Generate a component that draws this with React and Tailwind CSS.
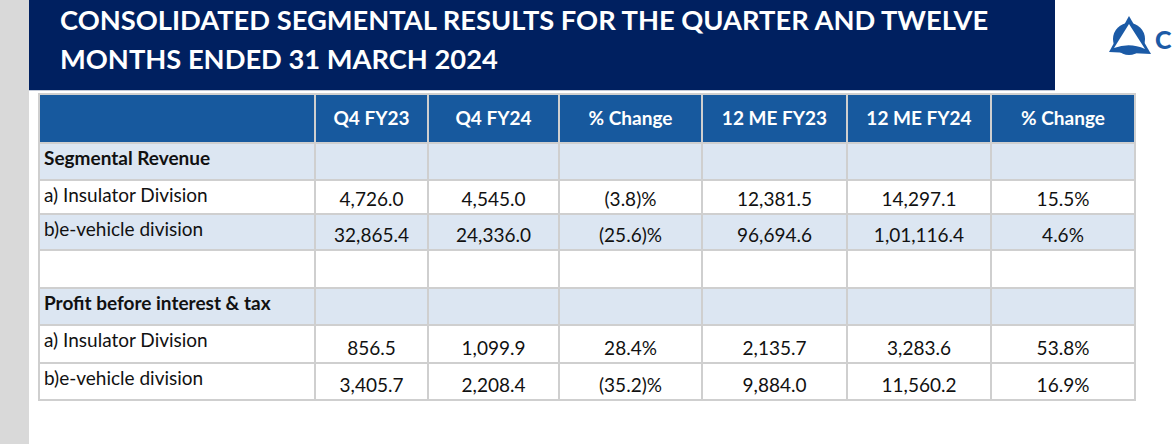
import React from "react";

const rows = [
  { label: "Segmental Revenue", bold: true, bg: "bg-[#dce6f2]", h: "h-[37px]", values: ["", "", "", "", "", ""] },
  { label: "a) Insulator Division", bg: "bg-white", h: "h-[34px]", values: ["4,726.0", "4,545.0", "(3.8)%", "12,381.5", "14,297.1", "15.5%"] },
  { label: "b)e-vehicle division", bg: "bg-[#dce6f2]", h: "h-[36px]", values: ["32,865.4", "24,336.0", "(25.6)%", "96,694.6", "1,01,116.4", "4.6%"] },
  { label: "", bg: "bg-white", h: "h-[38px]", values: ["", "", "", "", "", ""] },
  { label: "Profit before interest & tax", bold: true, bg: "bg-[#dce6f2]", h: "h-[37px]", values: ["", "", "", "", "", ""] },
  { label: "a) Insulator Division", bg: "bg-white", h: "h-[38px]", values: ["856.5", "1,099.9", "28.4%", "2,135.7", "3,283.6", "53.8%"] },
  { label: "b)e-vehicle division", bg: "bg-white", h: "h-[37px]", values: ["3,405.7", "2,208.4", "(35.2)%", "9,884.0", "11,560.2", "16.9%"] },
];

const headers = ["Q4 FY23", "Q4 FY24", "% Change", "12 ME FY23", "12 ME FY24", "% Change"];
const widths = ["w-[276px]", "w-[113px]", "w-[131px]", "w-[143px]", "w-[145px]", "w-[144px]", "w-[144px]"];

function Logo() {
  return (
    <svg width="48" height="44" viewBox="0 0 48 44">
      <circle cx="23" cy="24" r="16" fill="#1b5aa6" />
      <path d="M23 1 L3 37 L45 39 Z" fill="#1b5aa6" />
      <path d="M23 9 L8 33 Q24 27 39 34 Z" fill="#ffffff" />
    </svg>
  );
}

export default function App() {
  return (
    <div className="flex h-[444px] w-[1172px] overflow-hidden bg-white" style={{ fontFamily: "Lato, 'Open Sans', sans-serif" }}>
      <div className="w-[29px] shrink-0 bg-[#d9d9d9]" />
      <div className="flex flex-1 flex-col">
        <div className="flex">
          <div className="h-[91px] w-[1026px] shrink-0 border-b border-[#c3cad8] bg-[#002060] pl-[31px]">
            <h1 className="text-[27.3px] font-bold leading-[39px] text-white">
              CONSOLIDATED SEGMENTAL RESULTS FOR THE QUARTER AND TWELVE
              <br />
              MONTHS ENDED 31 MARCH 2024
            </h1>
          </div>
          <div className="flex items-start pl-[51px] pt-[15px]">
            <Logo />
            <span className="ml-[1px] mt-[13px] text-[25px] font-black leading-[22px] text-[#1b5aa6]">C</span>
          </div>
        </div>

        <table className="ml-[9px] mt-[2px] w-[1096px] table-fixed border-collapse text-[19px] text-[#111]">
          <colgroup>
            {widths.map((w, i) => (
              <col key={i} className={w} />
            ))}
          </colgroup>
          <thead>
            <tr className="h-[49px] bg-[#17599e]">
              <th className="border-2 border-[#cfcfcf]" />
              {headers.map((h, i) => (
                <th key={i} className="border-2 border-[#cfcfcf] text-center align-middle font-bold text-white">
                  {h}
                </th>
              ))}
            </tr>
          </thead>
          <tbody>
            {rows.map((r, i) => (
              <tr key={i} className={`${r.h} ${r.bg}`}>
                <td className={`border-2 border-[#cfcfcf] px-[4px] pt-[3px] align-top leading-[22px] ${r.bold ? "font-bold" : ""}`}>
                  {r.label}
                </td>
                {r.values.map((v, j) => (
                  <td key={j} className="border-2 border-[#cfcfcf] pb-[3px] text-center align-bottom leading-[22px]">
                    {v}
                  </td>
                ))}
              </tr>
            ))}
          </tbody>
        </table>
      </div>
    </div>
  );
}
